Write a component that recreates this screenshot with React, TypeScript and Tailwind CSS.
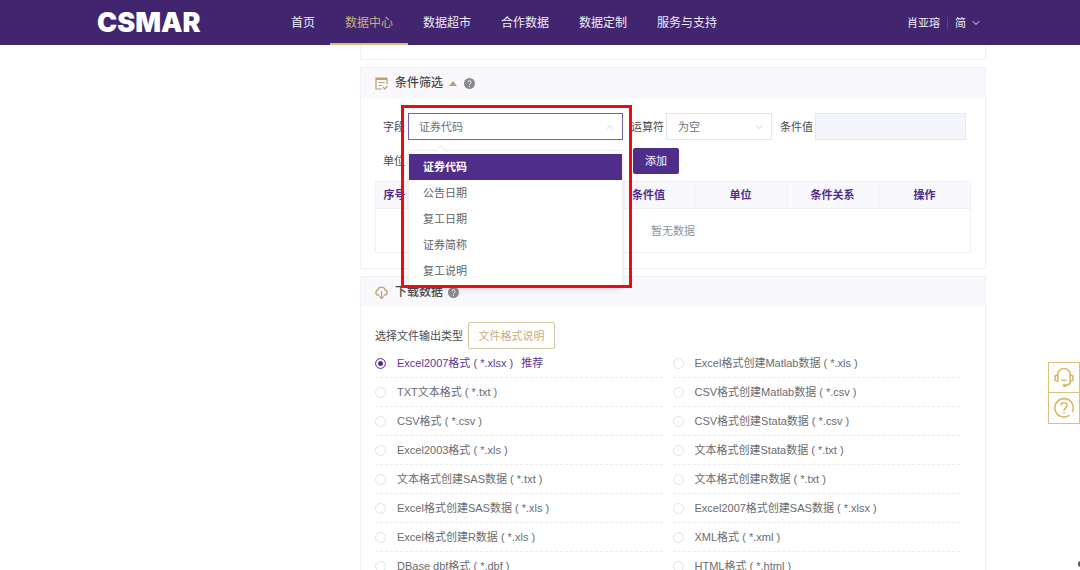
import { useState } from "react";
import type { ReactNode } from "react";
import clsx from "clsx";
import { ChevronDown, ChevronUp } from "lucide-react";

const NAV_ITEMS = ["首页", "数据中心", "数据超市", "合作数据", "数据定制", "服务与支持"];

const FIELDS = ["证券代码", "公告日期", "复工日期", "证券简称", "复工说明"];

const COLUMNS = [
  { key: "index", title: "序号", width: "w-[38px]" },
  { key: "field", title: "", width: "" },
  { key: "operator", title: "", width: "" },
  { key: "value", title: "条件值", width: "w-[92px]" },
  { key: "unit", title: "单位", width: "w-[92px]" },
  { key: "relation", title: "条件关系", width: "w-[92px]" },
  { key: "action", title: "操作", width: "w-[92px]" },
];

const FORMATS = [
  ["Excel2007格式 ( *.xlsx )", "Excel格式创建Matlab数据 ( *.xls )"],
  ["TXT文本格式 ( *.txt )", "CSV格式创建Matlab数据 ( *.csv )"],
  ["CSV格式 ( *.csv )", "CSV格式创建Stata数据 ( *.csv )"],
  ["Excel2003格式 ( *.xls )", "文本格式创建Stata数据 ( *.txt )"],
  ["文本格式创建SAS数据 ( *.txt )", "文本格式创建R数据 ( *.txt )"],
  ["Excel格式创建SAS数据 ( *.xls )", "Excel2007格式创建SAS数据 ( *.xlsx )"],
  ["Excel格式创建R数据 ( *.xls )", "XML格式 ( *.xml )"],
  ["DBase dbf格式 ( *.dbf )", "HTML格式 ( *.html )"],
].flat();

const FilterIcon = () => (
  <svg width="13" height="13" viewBox="0 0 13 13" fill="none" stroke="#b9a26c" strokeWidth="1.2">
    <path d="M12 7V1H1v11h6" />
    <path d="M1 2h11" strokeWidth="2" />
    <path d="M3.5 5.5h6M3.5 8.5h3.5M8 10l1.7 2L12.5 9" />
  </svg>
);

const CloudIcon = () => (
  <svg width="13" height="13" viewBox="0 0 13 13" fill="none" stroke="#b9a26c" strokeWidth="1.2">
    <path d="M4.5 9.2H3.2A2.7 2.7 0 0 1 3 3.9 3.600 3.600 0 0 1 10 3.900a2.700 2.700 0 0 1-.2 5.300H8.500" />
    <path d="M6.500 5v7.500M4.300 10.300l2.200 2.200 2.200-2.200" />
  </svg>
);

const HelpDot = () => (
  <svg width="11" height="11" viewBox="0 0 11 11" aria-hidden="true">
    <circle cx="5.5" cy="5.5" r="5.5" fill="#8a8a8a" />
    <path
      d="M3.9 4.3a1.6 1.6 0 1 1 2.4 1.4c-.6.3-.8.6-.8 1.1M5.5 7.8v1"
      fill="none"
      stroke="#fff"
    />
  </svg>
);

const Navbar = () => (
  <header className="z-30 h-[45px] shrink-0 bg-[#41266f] text-[#efeaf7]">
    <div className="mx-auto flex h-full max-w-[892px] items-center">
      <a
        href="#"
        className="w-[182px] pl-[3px] font-['Inter',sans-serif] text-[27px] leading-none font-black text-white"
      >
        CSMAR
      </a>
      <nav className="flex h-full text-xs">
        {NAV_ITEMS.map((item) => (
          <a
            key={item}
            href="#"
            className={clsx(
              "flex items-center border-y-2 border-t-transparent px-[15px]",
              item === "数据中心"
                ? "border-b-[#e0bb70] text-[#cdae7e]"
                : "border-b-transparent"
            )}
          >
            {item}
          </a>
        ))}
      </nav>
      <div className="ml-auto flex items-center pr-1">
        <a href="#">肖亚瑢</a>
        <span className="mx-[7px] h-3 w-px bg-[#5c3a97]" />
        <button className="flex items-center gap-1">
          简
          <ChevronDown size={12} />
        </button>
      </div>
    </div>
  </header>
);

interface PanelProps {
  icon: ReactNode;
  title: string;
  collapsible?: boolean;
  children: ReactNode;
}

const Panel = ({ icon, title, collapsible, children }: PanelProps) => (
  <section className="border border-[#f1f0f5]">
    <div className="flex h-[30px] items-center bg-[#f9f8fd] px-[14px]">
      {icon}
      <h2 className="ml-[7px] text-xs font-medium text-[#4a4a4a]">{title}</h2>
      {collapsible && (
        <svg width="8" height="5" viewBox="0 0 8 5" className="mr-0.5 ml-1.5">
          <path d="M0 5L4 0l4 5z" fill="#b9a26c" />
        </svg>
      )}
      <button aria-label={`${title}帮助`} className="ml-[5px]">
        <HelpDot />
      </button>
    </div>
    {children}
  </section>
);

const FieldSelect = () => {
  const [field, setField] = useState(FIELDS[0]);

  return (
    <div className="relative min-w-0 flex-1">
      <select
        id="field"
        value={field}
        onChange={(e) => setField(e.target.value)}
        className="h-[27px] w-full appearance-none border border-[#7a5fb0] bg-white px-[10px] text-[#707176] outline-none"
      >
        {FIELDS.map((name) => (
          <option key={name}>{name}</option>
        ))}
      </select>
      <ChevronUp
        size={12}
        strokeWidth={1.5}
        className="pointer-events-none absolute top-2 right-[7px] text-[#c0c4cc]"
      />

      <div className="absolute top-[37px] left-0 z-10 w-full border border-[#eeeef3] bg-white pt-[3px] pb-0.5 shadow-md">
        <span className="absolute -top-1 left-7 size-2 rotate-45 border-t border-l border-[#eeeef3] bg-white" />
        <ul role="listbox" aria-label="字段" className="relative">
          {FIELDS.map((name) => (
            <li
              key={name}
              role="option"
              aria-selected={name === field}
              onClick={() => setField(name)}
              className={clsx(
                "flex h-[26px] cursor-pointer items-center px-[14px]",
                name === field
                  ? "bg-[#4f2d8a] font-bold text-white"
                  : "text-[#606266]"
              )}
            >
              {name}
            </li>
          ))}
        </ul>
      </div>

      <div className="pointer-events-none absolute -top-2 -right-[9px] -left-[7px] z-20 h-[183px] border-[3px] border-[#ee0a10]" />
    </div>
  );
};

const FilterPanel = () => (
  <Panel icon={<FilterIcon />} title="条件筛选" collapsible>
    <div className="px-[14px] pt-[15px] pb-[15px]">
      <form className="grid grid-cols-[240fr_141fr_186fr] gap-2 pr-[5px] pl-2 text-[#4c4c50]">
        <div className="flex items-center gap-[3px]">
          <label htmlFor="field">字段</label>
          <FieldSelect />
        </div>
        <div className="flex items-center gap-0.5">
          <label htmlFor="operator">运算符</label>
          <div className="relative min-w-0 flex-1">
            <select
              id="operator"
              className="h-[27px] w-full appearance-none border border-[#e6e6ef] bg-white px-[11px] text-[#707176]"
            >
              <option>为空</option>
            </select>
            <ChevronDown
              size={12}
              strokeWidth={1.5}
              className="pointer-events-none absolute top-2 right-[7px] text-[#c0c4cc]"
            />
          </div>
        </div>
        <div className="flex items-center gap-0.5">
          <label htmlFor="value">条件值</label>
          <input
            id="value"
            disabled
            className="h-[27px] min-w-0 flex-1 border border-[#e6e7f0] bg-[#f4f5fa] px-[11px]"
          />
        </div>
        <div className="flex h-[26px] items-center gap-[3px]">
          <label htmlFor="unit">单位</label>
          <select
            id="unit"
            className="h-[26px] min-w-0 flex-1 appearance-none border border-transparent bg-white"
          />
        </div>
        <button
          type="button"
          className="ml-0.5 h-[26px] w-[46px] rounded-xs bg-[#4f2d8a] text-white"
        >
          添加
        </button>
      </form>

      <table className="mt-[7px] w-full table-fixed border-collapse">
        <thead>
          <tr className="h-[27px] bg-[#f9f8fd] text-[#4f2d8a]">
            {COLUMNS.map(({ key, title, width }) => (
              <th
                key={key}
                className={clsx("border border-[#f0eff6] font-bold", width)}
              >
                {title}
              </th>
            ))}
          </tr>
        </thead>
        <tbody>
          <tr className="h-11">
            <td
              colSpan={COLUMNS.length}
              className="border border-[#f0eff6] text-center text-[#909399]"
            >
              暂无数据
            </td>
          </tr>
        </tbody>
      </table>
    </div>
  </Panel>
);

const DownloadPanel = () => {
  const [format, setFormat] = useState(FORMATS[0]);

  return (
    <Panel icon={<CloudIcon />} title="下载数据">
      <div className="pt-[15px] pr-[25px] pb-4 pl-[14px]">
        <div className="flex items-center gap-[5px] text-[#4c4c50]">
          <span>选择文件输出类型</span>
          <button className="h-[27px] w-[87px] rounded-xs border border-[#d6c6a4] text-[#c5ae82]">
            文件格式说明
          </button>
        </div>
        <div className="grid grid-cols-2 gap-x-[10px]">
          {FORMATS.map((name, i) => (
            <label
              key={name}
              className={clsx(
                "flex h-[29px] items-center border-b border-dashed border-[#ededf0]",
                name === format ? "text-[#5b3a98]" : "text-[#6a6b70]"
              )}
            >
              <input
                type="radio"
                name="format"
                checked={name === format}
                onChange={() => setFormat(name)}
                className="mr-[11px] size-[11px] shrink-0 appearance-none rounded-full border border-[#e2e2e8] checked:border-[#7355ab] checked:bg-[#4f2d8a] checked:shadow-[inset_0_0_0_2px_#fff]"
              />
              {name}
              {i === 0 && <span className="ml-2">推荐</span>}
            </label>
          ))}
        </div>
      </div>
    </Panel>
  );
};

const SideTools = () => (
  <aside className="fixed top-[362px] right-0 z-20 w-8 divide-y divide-[#dcc07c] border border-[#dcc07c] bg-white">
    <button
      aria-label="在线客服"
      className="flex h-[30px] w-full items-center justify-center"
    >
      <svg width="22" height="22" viewBox="0 0 22 22" fill="none" stroke="#dab968" strokeWidth="1.6">
        <path d="M4.500 8a6.500 6.500 0 0 1 13 0" />
        <path d="M4.800 8v6H4a2 2 0 0 1-2-2v-2a2 2 0 0 1 2-2zM17.200 8v6h.8a2 2 0 0 0 2-2v-2a2 2 0 0 0-2-2z" />
        <path d="M8.500 12.500c1.300 1.300 3.700 1.300 5 0M17.500 14c-.5 3-2.500 4.500-5.500 4.500" />
        <circle cx="11.500" cy="18.500" r="1" fill="#dab968" />
      </svg>
    </button>
    <button
      aria-label="帮助"
      className="flex h-[30px] w-full items-center justify-center"
    >
      <svg width="22" height="22" viewBox="0 0 22 22" fill="none" stroke="#dab968" strokeWidth="1.6">
        <path d="M16.500 18.200A9.200 9.200 0 1 1 19.200 15" />
        <path d="M8 8.500a3 3 0 1 1 4.700 2.500c-1.200.8-1.700 1.300-1.700 2.800M11 15.300v1.500" />
      </svg>
    </button>
  </aside>
);

export default function App() {
  return (
    <div className="flex h-screen flex-col overflow-hidden bg-white font-['Liberation_Sans','Noto_Sans_CJK_SC',sans-serif] text-[11px] leading-4">
      <Navbar />
      <div className="mx-auto flex w-full max-w-[892px] flex-1">
        <div className="w-[266px] shrink-0" />
        <main className="flex min-w-0 flex-1 flex-col gap-[7px]">
          <div className="h-[15px] shrink-0 border border-t-0 border-[#f1f0f5]" />
          <FilterPanel />
          <DownloadPanel />
        </main>
      </div>
      <SideTools />
      <span className="fixed -right-1 bottom-[3px] size-1.5 rounded-full bg-[#55565a]" />
    </div>
  );
}
